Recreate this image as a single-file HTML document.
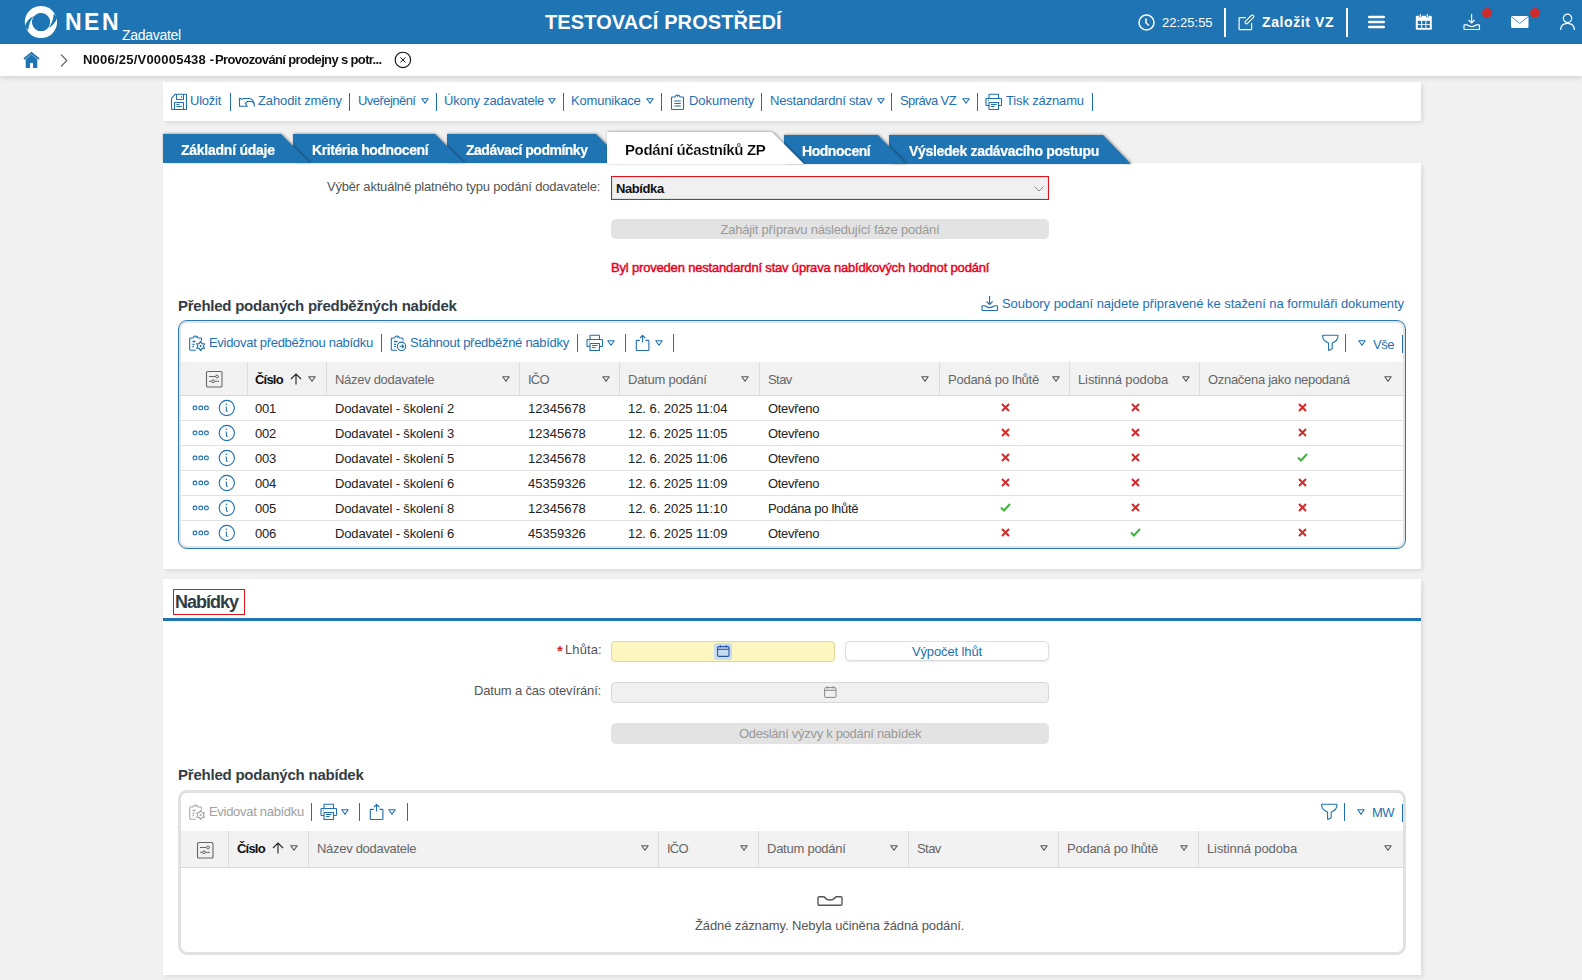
<!DOCTYPE html>
<html><head><meta charset="utf-8">
<style>
*{box-sizing:border-box;margin:0;padding:0}
html,body{width:1582px;height:980px;overflow:hidden;background:#f1f1f1;font-family:"Liberation Sans",sans-serif;color:#222}
.a{position:absolute;white-space:nowrap;line-height:normal}
svg.a{overflow:visible}
#hdr{position:absolute;left:0;top:0;width:1582px;height:44px;background:#1f74b3}
#bc{position:absolute;left:0;top:44px;width:1582px;height:32px;background:#fff;box-shadow:0 2px 5px rgba(0,0,0,.13);z-index:1}
.box{position:absolute;background:#fff;box-shadow:2px 2px 4px rgba(0,0,0,.09)}
.f13{font-size:13px;letter-spacing:-0.25px}
.bl{color:#1f6fb2}
.sep{position:absolute;width:1px;height:18px;background:#1f6fb2}
.tab{position:absolute;height:29px;filter:drop-shadow(0 -1px 1px rgba(0,0,0,.18)) drop-shadow(2px 0 1px rgba(0,0,0,.18))}
.tab svg{position:absolute;left:0;top:0}
.tabt{position:absolute;font-size:14px;font-weight:bold;color:#fff;letter-spacing:-0.5px;white-space:nowrap;-webkit-text-stroke:0.2px #fff}
.hd{position:absolute;font-size:13px;color:#666;letter-spacing:-0.25px;white-space:nowrap}
.cl{position:absolute;width:1px;background:#dcdcdc}
.rl{position:absolute;height:1px;background:#e2e2e2}
.td{position:absolute;font-size:13px;color:#222;letter-spacing:-0.15px;white-space:nowrap}
</style></head><body>
<!-- ============ HEADER ============ -->
<div id="hdr">
  <svg class="a" style="left:25px;top:6px" width="32" height="32" viewBox="0 0 32 32">
    <path d="M16 -0.1 A16.1 16.1 0 1 1 15.9 -0.1 Z M16 6.9 A9.1 9.1 0 1 0 16.1 6.9 Z" fill="#fff" fill-rule="evenodd"/>
    <path id="g1" d="M-0.2 20.4 C1.2 15.3 4.5 11.8 8.8 9.9 C5.8 13 3.9 17.8 3.1 24.6 Z" fill="#1f74b3"/>
    <path d="M-0.2 20.4 C1.2 15.3 4.5 11.8 8.8 9.9 C5.8 13 3.9 17.8 3.1 24.6 Z" fill="#1f74b3" transform="rotate(180 16 16)"/>
  </svg>
  <div class="a" style="left:65px;top:9px;font-size:23px;font-weight:bold;color:#fff;letter-spacing:2.5px">NEN</div>
  <div class="a" style="left:122px;top:27px;font-size:14px;color:#fff;letter-spacing:-0.3px">Zadavatel</div>
  <div class="a" style="left:545px;top:11px;font-size:20px;font-weight:bold;color:#fff;letter-spacing:0.1px">TESTOVACÍ PROSTŘEDÍ</div>
  <!-- clock -->
  <svg class="a" style="left:1138px;top:14px" width="17" height="17" viewBox="0 0 17 17"><circle cx="8.5" cy="8.5" r="7.5" fill="none" stroke="#fff" stroke-width="1.5"/><path d="M8 4.5 V8.8 L10.8 11.5" fill="none" stroke="#fff" stroke-width="1.5"/></svg>
  <div class="a" style="left:1162px;top:15px;font-size:13px;color:#fff;letter-spacing:0px">22:25:55</div>
  <div class="a" style="left:1224px;top:8px;width:2px;height:29px;background:#fff"></div>
  <!-- edit -->
  <svg class="a" style="left:1238px;top:14px" width="17" height="17" viewBox="0 0 17 17"><path d="M7.7 3.7 H1.8 Q1.1 3.7 1.1 4.4 V15 Q1.1 15.6 1.8 15.6 H13 Q13.6 15.6 13.6 15 V9.1" fill="none" stroke="#fff" stroke-width="1.2"/><rect x="5.8" y="4" width="11.2" height="2.9" rx="1.45" fill="none" stroke="#fff" stroke-width="1.1" transform="rotate(-45 11.4 5.45)"/></svg>
  <div class="a" style="left:1262px;top:14px;font-size:14px;font-weight:bold;color:#fff;letter-spacing:0.6px">Založit VZ</div>
  <div class="a" style="left:1346px;top:8px;width:2px;height:29px;background:#fff"></div>
  <!-- hamburger -->
  <svg class="a" style="left:1368px;top:15px" width="17" height="14" viewBox="0 0 17 14"><path d="M1.2 2 H15.8 M1.2 7 H15.8 M1.2 12 H15.8" stroke="#fff" stroke-width="2.4" stroke-linecap="round"/></svg>
  <!-- calendar -->
  <svg class="a" style="left:1415px;top:14px" width="18" height="17" viewBox="0 0 18 17"><rect x="0.8" y="1.8" width="16" height="14" rx="1.2" fill="#fff"/><g fill="#1f74b3"><rect x="2.8" y="6.8" width="3.4" height="3.4"/><rect x="7.2" y="6.8" width="3.2" height="3.4"/><rect x="11.4" y="6.8" width="3.4" height="3.4"/><rect x="2.8" y="11" width="3.4" height="3"/><rect x="7.2" y="11" width="3.2" height="3"/><rect x="11.4" y="11" width="3.4" height="3"/><rect x="4" y="0" width="2.6" height="3.4"/><rect x="11" y="0" width="2.6" height="3.4"/></g><path d="M5.3 0 V3.5 M12.3 0 V3.5" stroke="#fff" stroke-width="1.1"/></svg>
  <!-- download -->
  <svg class="a" style="left:1463px;top:14px" width="18" height="17" viewBox="0 0 18 17"><path d="M8.6 0 V9 M5.6 6 L8.6 9 L11.6 6" fill="none" stroke="#fff" stroke-width="1.2"/><path d="M1.7 10.8 Q1 10.8 1 11.5 V14.8 Q1 15.5 1.7 15.5 H15.8 Q16.5 15.5 16.5 14.8 V11.5 Q16.5 10.8 15.8 10.8 H13.5 C12 12 10.5 12.6 8.75 12.6 C7 12.6 5.5 12 4 10.8 Z" fill="none" stroke="#fff" stroke-width="1.2" stroke-linejoin="round"/></svg>
  <div class="a" style="left:1482px;top:8px;width:10px;height:10px;border-radius:50%;background:#c92d2b"></div>
  <!-- mail -->
  <svg class="a" style="left:1511px;top:16px" width="18" height="12" viewBox="0 0 18 12"><rect x="0" y="0" width="17.5" height="12" rx="1.5" fill="#fff"/><path d="M0.6 0.9 L8.75 7.4 L16.9 0.9" fill="none" stroke="#1f74b3" stroke-width="0.8"/></svg>
  <div class="a" style="left:1530px;top:8px;width:10px;height:10px;border-radius:50%;background:#c92d2b"></div>
  <!-- user -->
  <svg class="a" style="left:1559px;top:13px" width="17" height="18" viewBox="0 0 17 18"><circle cx="8.5" cy="5.3" r="4.2" fill="none" stroke="#fff" stroke-width="1.2"/><path d="M1.5 17 C1.8 12.5 4.8 10.3 8.5 10.3 C12.2 10.3 15.2 12.5 15.5 17" fill="none" stroke="#fff" stroke-width="1.2"/></svg>
</div>

<!-- ============ BREADCRUMB ============ -->
<div id="bc">
  <svg class="a" style="left:23px;top:8px" width="17" height="16" viewBox="0 0 17 16"><path d="M1 7 L8.5 1 L16 7" fill="none" stroke="#1f74b3" stroke-width="1.8"/><path d="M2.7 7.2 L8.5 2.6 L14.3 7.2 V16 H10 V11 H7 V16 H2.7 Z" fill="#1f74b3"/></svg>
  <svg class="a" style="left:60px;top:10px" width="8" height="13" viewBox="0 0 8 13"><path d="M1 0.5 L6.8 6.5 L1 12.5" fill="none" stroke="#666" stroke-width="1.1"/></svg>
  <div class="a" style="left:83px;top:52px;position:fixed;font-size:13px;font-weight:bold;color:#111;letter-spacing:0.22px">N006/25/V00005438 -</div><div class="a" style="left:215px;top:52px;position:fixed;font-size:13px;font-weight:bold;color:#111;letter-spacing:-0.64px">Provozování prodejny s potr...</div>
  <svg class="a" style="left:394px;top:7px" width="18" height="18" viewBox="0 0 18 18"><circle cx="8.9" cy="8.9" r="7.7" fill="none" stroke="#111" stroke-width="1.15"/><path d="M6.4 6.4 L11.4 11.4 M11.4 6.4 L6.4 11.4" stroke="#111" stroke-width="1"/></svg>
</div>

<!-- ============ TOOLBAR ============ -->
<div class="box" style="left:163px;top:82px;width:1258px;height:39px"></div>
<div class="f13 bl">
  <svg class="a" style="left:171px;top:94px" width="16" height="16" viewBox="0 0 16 16"><g fill="none" stroke="#1f6fb2" stroke-width="1.1" stroke-linejoin="round"><path d="M0.5 4.5 L4 0.3 H15 Q15.5 0.3 15.5 0.8 V15 Q15.5 15.5 15 15.5 H1 Q0.5 15.5 0.5 15 Z"/><path d="M5.5 0.3 V5 Q5.5 5.5 6 5.5 H12 Q12.5 5.5 12.5 5 V0.3 M10.5 2.3 V3.8"/><path d="M3.5 15.5 V9 Q3.5 8.5 4 8.5 H12 Q12.5 8.5 12.5 9 V15.5 M5.5 10.5 H8.5 M5.5 12.5 H10.8"/></g></svg>
  <div class="a" style="left:190px;top:93px">Uložit</div>
  <div class="sep" style="left:230px;top:93px"></div>
  <svg class="a" style="left:238px;top:96px" width="18" height="12" viewBox="0 0 18 12"><path d="M1.5 2 V10.3 H9.3 L7.3 7.5 L9.5 5.5 H13.5 C15 5.7 16.2 7.5 16.5 10.5 M1.5 2 L3.5 3.2 L5.5 2.5 H11.5 C14.5 2.8 16.3 5.5 16.5 10.5" fill="none" stroke="#1f6fb2" stroke-width="1.1" stroke-linejoin="round"/></svg>
  <div class="a" style="left:258px;top:93px;letter-spacing:-0.1px">Zahodit změny</div>
  <div class="sep" style="left:349px;top:93px"></div>
  <div class="a" style="left:358px;top:93px;letter-spacing:-0.55px">Uveřejnění</div>
  <svg class="a tri" style="left:421px;top:98px" width="8" height="6" viewBox="0 0 8 6"><path d="M0.8 0.7 H7.2 L4 5.3 Z" fill="none" stroke="#1f6fb2" stroke-width="1.1" stroke-linejoin="round"/></svg>
  <div class="sep" style="left:436px;top:93px"></div>
  <div class="a" style="left:444px;top:93px;letter-spacing:-0.2px">Úkony zadavatele</div>
  <svg class="a tri" style="left:548px;top:98px" width="8" height="6" viewBox="0 0 8 6"><path d="M0.8 0.7 H7.2 L4 5.3 Z" fill="none" stroke="#1f6fb2" stroke-width="1.1" stroke-linejoin="round"/></svg>
  <div class="sep" style="left:563px;top:93px"></div>
  <div class="a" style="left:571px;top:93px;letter-spacing:-0.2px">Komunikace</div>
  <svg class="a tri" style="left:646px;top:98px" width="8" height="6" viewBox="0 0 8 6"><path d="M0.8 0.7 H7.2 L4 5.3 Z" fill="none" stroke="#1f6fb2" stroke-width="1.1" stroke-linejoin="round"/></svg>
  <div class="sep" style="left:661px;top:93px"></div>
  <svg class="a" style="left:670px;top:93px" width="15" height="17" viewBox="0 0 15 17"><g fill="none" stroke="#1f6fb2" stroke-width="1.1" stroke-linejoin="round"><path d="M2.2 4 H5 C5.5 1.3 9.5 1.3 10 4 H12.8 Q13.5 4 13.5 4.7 V15.8 Q13.5 16.5 12.8 16.5 H2.2 Q1.5 16.5 1.5 15.8 V4.7 Q1.5 4 2.2 4 Z"/><path d="M4.3 8 H10.8 M4.3 10.5 H10.8 M4.3 13 H10.8" stroke-width="1.2"/></g><circle cx="7.5" cy="3.3" r="0.7" fill="#1f6fb2"/></svg>
  <div class="a" style="left:689px;top:93px;letter-spacing:-0.05px">Dokumenty</div>
  <div class="sep" style="left:761px;top:93px"></div>
  <div class="a" style="left:770px;top:93px;letter-spacing:-0.2px">Nestandardní stav</div>
  <svg class="a tri" style="left:877px;top:98px" width="8" height="6" viewBox="0 0 8 6"><path d="M0.8 0.7 H7.2 L4 5.3 Z" fill="none" stroke="#1f6fb2" stroke-width="1.1" stroke-linejoin="round"/></svg>
  <div class="sep" style="left:891px;top:93px"></div>
  <div class="a" style="left:900px;top:93px;letter-spacing:-0.6px">Správa VZ</div>
  <svg class="a tri" style="left:962px;top:98px" width="8" height="6" viewBox="0 0 8 6"><path d="M0.8 0.7 H7.2 L4 5.3 Z" fill="none" stroke="#1f6fb2" stroke-width="1.1" stroke-linejoin="round"/></svg>
  <div class="sep" style="left:977px;top:93px"></div>
  <svg class="a" style="left:985px;top:94px" width="17" height="16" viewBox="0 0 17 16"><g fill="none" stroke="#1f6fb2" stroke-width="1.1" stroke-linejoin="round"><path d="M4 4.5 V0.8 Q4 0.3 4.5 0.3 H13 Q13.5 0.3 13.5 0.8 V4.5"/><path d="M4 11.5 H1.5 Q1 11.5 1 11 V5 Q1 4.5 1.5 4.5 H16 Q16.5 4.5 16.5 5 V11 Q16.5 11.5 16 11.5 H13.5"/><path d="M4 8.5 H13.5 V15.5 H4 Z M6 10.5 H11.5 M6 12.5 H9.5"/></g><circle cx="3.5" cy="6.5" r="0.6" fill="#1f6fb2"/></svg>
  <div class="a" style="left:1006px;top:93px;letter-spacing:-0.15px">Tisk záznamu</div>
  <div class="sep" style="left:1092px;top:93px"></div>
</div>

<!-- ============ TABS ============ -->
<div class="tab" style="left:163px;top:134px;width:150px;z-index:6">
  <svg width="150" height="29"><path d="M0 0 H118 L147 29 H0 Z" fill="#1f74b3"/></svg>
  <div class="tabt" style="left:18px;top:8px;letter-spacing:-0.25px">Základní údaje</div>
</div>
<div class="tab" style="left:293px;top:134px;width:175px;z-index:5">
  <svg width="175" height="29"><path d="M0 0 H142 L171 29 H0 Z" fill="#1f74b3"/></svg>
  <div class="tabt" style="left:19px;top:8px;letter-spacing:-0.42px">Kritéria hodnocení</div>
</div>
<div class="tab" style="left:447px;top:134px;width:180px;z-index:4">
  <svg width="180" height="29"><path d="M0 0 H149 L178 29 H0 Z" fill="#1f74b3"/></svg>
  <div class="tabt" style="left:19px;top:8px;letter-spacing:-0.5px">Zadávací podmínky</div>
</div>
<div class="tab" style="left:889px;top:135px;width:245px;z-index:2">
  <svg width="245" height="29"><path d="M0 0 H214 L242 29 H0 Z" fill="#1f74b3"/></svg>
  <div class="tabt" style="left:20px;top:8px;letter-spacing:-0.34px">Výsledek zadávacího postupu</div>
</div>
<div class="tab" style="left:784px;top:135px;width:125px;z-index:3">
  <svg width="125" height="29"><path d="M0 0 H94 L122 29 H0 Z" fill="#1f74b3"/></svg>
  <div class="tabt" style="left:18px;top:8px;letter-spacing:-0.45px">Hodnocení</div>
</div>

<!-- ============ MAIN BOX 1 ============ -->
<div class="box" style="left:163px;top:163px;width:1258px;height:406px"></div>
<div class="tab" style="left:607px;top:132px;width:200px;z-index:7">
  <svg width="200" height="32"><path d="M0 0 H165 L197 32 H0 Z" fill="#fff"/></svg>
  <div class="tabt" style="left:18px;top:9px;font-size:15px;color:#000;letter-spacing:-0.38px">Podání účastníků ZP</div>
</div>


<!-- ============ FORM 1 ============ -->
<div class="a f13" style="left:327px;top:179px;color:#555;letter-spacing:-0.2px">Výběr aktuálně platného typu podání dodavatele:</div>
<div class="a" style="left:611px;top:176px;width:438px;height:24px;border:1px solid #e3131d;background:#f0f0f0;box-shadow:inset 0 0 0 1px #dfe3e3"></div>
<div class="a" style="left:616px;top:181px;font-size:13px;font-weight:bold;color:#111;letter-spacing:-0.4px">Nabídka</div>
<svg class="a" style="left:1034px;top:186px" width="10" height="6" viewBox="0 0 10 6"><path d="M0.5 0.5 L5 5 L9.5 0.5" fill="none" stroke="#888" stroke-width="1"/></svg>
<div class="a" style="left:611px;top:219px;width:438px;height:20px;border-radius:5px;background:#e3e3e3"></div>
<div class="a f13" style="left:611px;top:222px;width:438px;text-align:center;color:#999;letter-spacing:-0.22px">Zahájit přípravu následující fáze podání</div>
<div class="a" style="left:611px;top:260px;font-size:13px;color:#e8001c;letter-spacing:-0.18px;-webkit-text-stroke:0.45px #e8001c">Byl proveden nestandardní stav úprava nabídkových hodnot podání</div>

<div class="a" style="left:178px;top:297px;font-size:15px;font-weight:bold;color:#333c45;letter-spacing:-0.25px">Přehled podaných předběžných nabídek</div>
<svg class="a" style="left:981px;top:296px" width="18" height="16" viewBox="0 0 18 16"><path d="M8.6 0 V8.5 M5.6 5.5 L8.6 8.5 L11.6 5.5" fill="none" stroke="#1f6fb2" stroke-width="1.1"/><path d="M1.7 9.8 Q1 9.8 1 10.5 V13.8 Q1 14.5 1.7 14.5 H15.8 Q16.5 14.5 16.5 13.8 V10.5 Q16.5 9.8 15.8 9.8 H13.5 C12 11 10.5 11.6 8.75 11.6 C7 11.6 5.5 11 4 9.8 Z" fill="none" stroke="#1f6fb2" stroke-width="1.1" stroke-linejoin="round"/></svg>
<div class="a f13 bl" style="left:1002px;top:296px;letter-spacing:-0.05px">Soubory podaní najdete připravené ke stažení na formuláři dokumenty</div>


<!-- ============ PANEL 1 ============ -->
<div class="a" style="left:178px;top:320px;width:1228px;height:229px;border:1px solid #2a78b8;border-radius:9px;box-shadow:inset 0 0 0 2px #e3e4e6;background:#fff"></div>
<svg class="a" style="left:189px;top:335px" width="17" height="17" viewBox="0 0 17 17"><g fill="none" stroke="#1f6fb2" stroke-width="1.1" stroke-linejoin="round"><path d="M6.8 15.3 H1.6 Q0.7 15.3 0.7 14.4 V3.9 Q0.7 3 1.6 3 H4 C4.5 0.3 8.5 0.3 9 3 H11.6 Q12.5 3 12.5 3.9 V5.8"/><path d="M11.60 6.40 L12.97 8.62 L15.58 8.70 L14.35 11.00 L15.58 13.30 L12.97 13.38 L11.60 15.60 L10.22 13.38 L7.62 13.30 L8.85 11.00 L7.62 8.70 L10.22 8.62 Z"/></g><g stroke="#1f6fb2" stroke-width="1.3"><path d="M3.5 6.5 H6.5 M3.5 9.3 H5.5 M3.5 11.6 H5"/></g><circle cx="7" cy="2.3" r="0.6" fill="#1f6fb2"/><circle cx="11.6" cy="11" r="1" fill="#1f6fb2"/></svg>
<div class="a f13 bl" style="left:209px;top:335px;letter-spacing:-0.3px">Evidovat předběžnou nabídku</div>
<div class="sep" style="left:381px;top:334px"></div>
<svg class="a" style="left:390px;top:335px" width="17" height="17" viewBox="0 0 17 17"><g fill="none" stroke="#1f6fb2" stroke-width="1.1" stroke-linejoin="round"><path d="M7 15.3 H2.2 Q1.3 15.3 1.3 14.4 V3.9 Q1.3 3 2.2 3 H4.5 C5 0.3 9 0.3 9.5 3 H12 Q13 3 13 4 V5.5"/><circle cx="11.5" cy="11.3" r="4.2"/><path d="M9.6 11.3 H13.6 M12 9.6 L13.7 11.3 L12 13"/></g><g stroke="#1f6fb2" stroke-width="1.3"><path d="M4 6.5 H7.5 M4 9.3 H6 M4 11.6 H5.8"/></g><circle cx="7.3" cy="2.3" r="0.6" fill="#1f6fb2"/></svg>
<div class="a f13 bl" style="left:410px;top:335px;letter-spacing:-0.28px">Stáhnout předběžné nabídky</div>
<div class="sep" style="left:577px;top:334px"></div>
<svg class="a" style="left:586px;top:335px" width="17" height="16" viewBox="0 0 17 16"><g fill="none" stroke="#1f6fb2" stroke-width="1.1" stroke-linejoin="round"><path d="M4 4.5 V0.8 Q4 0.3 4.5 0.3 H13 Q13.5 0.3 13.5 0.8 V4.5"/><path d="M4 11.5 H1.5 Q1 11.5 1 11 V5 Q1 4.5 1.5 4.5 H16 Q16.5 4.5 16.5 5 V11 Q16.5 11.5 16 11.5 H13.5"/><path d="M4 8.5 H13.5 V15.5 H4 Z M6 10.5 H11.5 M6 12.5 H9.5"/></g><circle cx="3.5" cy="6.5" r="0.6" fill="#1f6fb2"/></svg>
<svg class="a" style="left:607px;top:340px" width="8" height="6" viewBox="0 0 8 6"><path d="M0.8 0.7 H7.2 L4 5.3 Z" fill="none" stroke="#1f6fb2" stroke-width="1.1" stroke-linejoin="round"/></svg>
<div class="sep" style="left:625px;top:334px"></div>
<svg class="a" style="left:635px;top:334px" width="15" height="17" viewBox="0 0 15 17"><g fill="none" stroke="#1f6fb2" stroke-width="1.1" stroke-linejoin="round"><path d="M4.8 6.4 H2 Q1.3 6.4 1.3 7.1 V15.8 Q1.3 16.5 2 16.5 H13.2 Q13.9 16.5 13.9 15.8 V7.1 Q13.9 6.4 13.2 6.4 H10.4"/><path d="M7.6 8.6 V1.5 M5 4 L7.6 1.4 L10.2 4"/></g></svg>
<svg class="a" style="left:655px;top:340px" width="8" height="6" viewBox="0 0 8 6"><path d="M0.8 0.7 H7.2 L4 5.3 Z" fill="none" stroke="#1f6fb2" stroke-width="1.1" stroke-linejoin="round"/></svg>
<div class="sep" style="left:673px;top:334px"></div>
<svg class="a" style="left:1322px;top:334px" width="17" height="17" viewBox="0 0 17 17"><path d="M1 1.3 H15.6 Q16 1.3 16 1.8 C16 5 13.8 7.8 10.2 9 V14.3 Q10.2 14.8 9.8 15 L7.2 16.3 Q6.6 16.5 6.6 16 V9 C3 7.8 0.6 5 0.6 1.8 Q0.6 1.3 1 1.3 Z" fill="none" stroke="#1f6fb2" stroke-width="1.1" stroke-linejoin="round"/></svg>
<div class="sep" style="left:1345px;top:334px"></div>
<svg class="a" style="left:1358px;top:340px" width="8" height="6" viewBox="0 0 8 6"><path d="M0.8 0.7 H7.2 L4 5.3 Z" fill="none" stroke="#1f6fb2" stroke-width="1.1" stroke-linejoin="round"/></svg>
<div class="a f13 bl" style="left:1373px;top:337px;letter-spacing:-0.4px">Vše</div>
<div class="sep" style="left:1402px;top:335px;width:1px"></div>
<!-- table header -->
<div class="a" style="left:181px;top:362px;width:1222px;height:34px;background:#f2f2f2;border-bottom:1px solid #d9d9d9"></div>

<div class="cl" style="left:247px;top:362px;height:33px"></div>
<div class="cl" style="left:326px;top:362px;height:33px"></div>
<div class="cl" style="left:519px;top:362px;height:33px"></div>
<div class="cl" style="left:619px;top:362px;height:33px"></div>
<div class="cl" style="left:759px;top:362px;height:33px"></div>
<div class="cl" style="left:939px;top:362px;height:33px"></div>
<div class="cl" style="left:1069px;top:362px;height:33px"></div>
<div class="cl" style="left:1199px;top:362px;height:33px"></div>
<svg class="a" style="left:206px;top:371px" width="17" height="17" viewBox="0 0 17 17"><rect x="0.5" y="0.5" width="15.5" height="15.5" rx="1.3" fill="none" stroke="#666" stroke-width="1.1"/><path d="M3 5.5 H13 M3 10.3 H13" stroke="#666" stroke-width="1"/><circle cx="11" cy="5.5" r="1.4" fill="#f2f2f2" stroke="#666" stroke-width="1"/><circle cx="7" cy="10.3" r="1.4" fill="#f2f2f2" stroke="#666" stroke-width="1"/></svg>
<div class="a" style="left:255px;top:372px;font-size:13px;font-weight:bold;color:#111;letter-spacing:-0.8px">Číslo</div>
<svg class="a" style="left:290px;top:373px" width="12" height="12" viewBox="0 0 12 12"><path d="M6 11.5 V1 M1 6 L6 1 L11 6" fill="none" stroke="#222" stroke-width="1.1"/></svg>
<svg class="a" style="left:308px;top:376px" width="8" height="6" viewBox="0 0 8 6"><path d="M0.8 0.7 H7.2 L4 5.3 Z" fill="none" stroke="#555" stroke-width="1.1" stroke-linejoin="round"/></svg>
<div class="hd" style="left:335px;top:372px;letter-spacing:-0.3px">Název dodavatele</div>
<svg class="a" style="left:502px;top:376px" width="8" height="6" viewBox="0 0 8 6"><path d="M0.8 0.7 H7.2 L4 5.3 Z" fill="none" stroke="#555" stroke-width="1.1" stroke-linejoin="round"/></svg>
<div class="hd" style="left:528px;top:372px;letter-spacing:-0.8px">IČO</div>
<svg class="a" style="left:602px;top:376px" width="8" height="6" viewBox="0 0 8 6"><path d="M0.8 0.7 H7.2 L4 5.3 Z" fill="none" stroke="#555" stroke-width="1.1" stroke-linejoin="round"/></svg>
<div class="hd" style="left:628px;top:372px;letter-spacing:-0.25px">Datum podání</div>
<svg class="a" style="left:741px;top:376px" width="8" height="6" viewBox="0 0 8 6"><path d="M0.8 0.7 H7.2 L4 5.3 Z" fill="none" stroke="#555" stroke-width="1.1" stroke-linejoin="round"/></svg>
<div class="hd" style="left:768px;top:372px;letter-spacing:-0.55px">Stav</div>
<svg class="a" style="left:921px;top:376px" width="8" height="6" viewBox="0 0 8 6"><path d="M0.8 0.7 H7.2 L4 5.3 Z" fill="none" stroke="#555" stroke-width="1.1" stroke-linejoin="round"/></svg>
<div class="hd" style="left:948px;top:372px;letter-spacing:-0.25px">Podaná po lhůtě</div>
<svg class="a" style="left:1052px;top:376px" width="8" height="6" viewBox="0 0 8 6"><path d="M0.8 0.7 H7.2 L4 5.3 Z" fill="none" stroke="#555" stroke-width="1.1" stroke-linejoin="round"/></svg>
<div class="hd" style="left:1078px;top:372px;letter-spacing:-0.12px">Listinná podoba</div>
<svg class="a" style="left:1182px;top:376px" width="8" height="6" viewBox="0 0 8 6"><path d="M0.8 0.7 H7.2 L4 5.3 Z" fill="none" stroke="#555" stroke-width="1.1" stroke-linejoin="round"/></svg>
<div class="hd" style="left:1208px;top:372px;letter-spacing:-0.3px">Označena jako nepodaná</div>
<svg class="a" style="left:1384px;top:376px" width="8" height="6" viewBox="0 0 8 6"><path d="M0.8 0.7 H7.2 L4 5.3 Z" fill="none" stroke="#555" stroke-width="1.1" stroke-linejoin="round"/></svg>
<div class="rl" style="left:181px;top:420px;width:1222px"></div>
<svg class="a" style="left:192px;top:405px" width="18" height="6" viewBox="0 0 18 6"><rect x="1.2" y="1.1" width="3.6" height="3.6" rx="1.2" fill="none" stroke="#1f6fb2" stroke-width="1.1"/><rect x="7" y="1.1" width="3.6" height="3.6" rx="1.2" fill="none" stroke="#1f6fb2" stroke-width="1.1"/><rect x="12.6" y="1.1" width="3.6" height="3.6" rx="1.2" fill="none" stroke="#1f6fb2" stroke-width="1.1"/></svg>
<svg class="a" style="left:218px;top:400px" width="17" height="17" viewBox="0 0 17 17"><circle cx="8.8" cy="8" r="7.6" fill="none" stroke="#1f6fb2" stroke-width="1.1"/><circle cx="8.4" cy="4.3" r="0.8" fill="#1f6fb2"/><path d="M7.6 6.8 C8.3 6.8 8.4 7.2 8.4 8 V10.3 C8.4 11 8.8 11.4 9.6 11.6" fill="none" stroke="#1f6fb2" stroke-width="1.1"/></svg>
<div class="td" style="left:255px;top:401px;letter-spacing:-0.2px">001</div>
<div class="td" style="left:335px;top:401px">Dodavatel - školení 2</div>
<div class="td" style="left:528px;top:401px;letter-spacing:0px">12345678</div>
<div class="td" style="left:628px;top:401px;letter-spacing:-0.05px">12. 6. 2025 11:04</div>
<div class="td" style="left:768px;top:401px;letter-spacing:-0.3px">Otevřeno</div>
<svg class="a" style="left:1001px;top:403px" width="9" height="9" viewBox="0 0 9 9"><path d="M1 1 L8 8 M8 1 L1 8" stroke="#d42a2a" stroke-width="2"/></svg>
<svg class="a" style="left:1131px;top:403px" width="9" height="9" viewBox="0 0 9 9"><path d="M1 1 L8 8 M8 1 L1 8" stroke="#d42a2a" stroke-width="2"/></svg>
<svg class="a" style="left:1298px;top:403px" width="9" height="9" viewBox="0 0 9 9"><path d="M1 1 L8 8 M8 1 L1 8" stroke="#d42a2a" stroke-width="2"/></svg>
<div class="rl" style="left:181px;top:445px;width:1222px"></div>
<svg class="a" style="left:192px;top:430px" width="18" height="6" viewBox="0 0 18 6"><rect x="1.2" y="1.1" width="3.6" height="3.6" rx="1.2" fill="none" stroke="#1f6fb2" stroke-width="1.1"/><rect x="7" y="1.1" width="3.6" height="3.6" rx="1.2" fill="none" stroke="#1f6fb2" stroke-width="1.1"/><rect x="12.6" y="1.1" width="3.6" height="3.6" rx="1.2" fill="none" stroke="#1f6fb2" stroke-width="1.1"/></svg>
<svg class="a" style="left:218px;top:425px" width="17" height="17" viewBox="0 0 17 17"><circle cx="8.8" cy="8" r="7.6" fill="none" stroke="#1f6fb2" stroke-width="1.1"/><circle cx="8.4" cy="4.3" r="0.8" fill="#1f6fb2"/><path d="M7.6 6.8 C8.3 6.8 8.4 7.2 8.4 8 V10.3 C8.4 11 8.8 11.4 9.6 11.6" fill="none" stroke="#1f6fb2" stroke-width="1.1"/></svg>
<div class="td" style="left:255px;top:426px;letter-spacing:-0.2px">002</div>
<div class="td" style="left:335px;top:426px">Dodavatel - školení 3</div>
<div class="td" style="left:528px;top:426px;letter-spacing:0px">12345678</div>
<div class="td" style="left:628px;top:426px;letter-spacing:-0.05px">12. 6. 2025 11:05</div>
<div class="td" style="left:768px;top:426px;letter-spacing:-0.3px">Otevřeno</div>
<svg class="a" style="left:1001px;top:428px" width="9" height="9" viewBox="0 0 9 9"><path d="M1 1 L8 8 M8 1 L1 8" stroke="#d42a2a" stroke-width="2"/></svg>
<svg class="a" style="left:1131px;top:428px" width="9" height="9" viewBox="0 0 9 9"><path d="M1 1 L8 8 M8 1 L1 8" stroke="#d42a2a" stroke-width="2"/></svg>
<svg class="a" style="left:1298px;top:428px" width="9" height="9" viewBox="0 0 9 9"><path d="M1 1 L8 8 M8 1 L1 8" stroke="#d42a2a" stroke-width="2"/></svg>
<div class="rl" style="left:181px;top:470px;width:1222px"></div>
<svg class="a" style="left:192px;top:455px" width="18" height="6" viewBox="0 0 18 6"><rect x="1.2" y="1.1" width="3.6" height="3.6" rx="1.2" fill="none" stroke="#1f6fb2" stroke-width="1.1"/><rect x="7" y="1.1" width="3.6" height="3.6" rx="1.2" fill="none" stroke="#1f6fb2" stroke-width="1.1"/><rect x="12.6" y="1.1" width="3.6" height="3.6" rx="1.2" fill="none" stroke="#1f6fb2" stroke-width="1.1"/></svg>
<svg class="a" style="left:218px;top:450px" width="17" height="17" viewBox="0 0 17 17"><circle cx="8.8" cy="8" r="7.6" fill="none" stroke="#1f6fb2" stroke-width="1.1"/><circle cx="8.4" cy="4.3" r="0.8" fill="#1f6fb2"/><path d="M7.6 6.8 C8.3 6.8 8.4 7.2 8.4 8 V10.3 C8.4 11 8.8 11.4 9.6 11.6" fill="none" stroke="#1f6fb2" stroke-width="1.1"/></svg>
<div class="td" style="left:255px;top:451px;letter-spacing:-0.2px">003</div>
<div class="td" style="left:335px;top:451px">Dodavatel - školení 5</div>
<div class="td" style="left:528px;top:451px;letter-spacing:0px">12345678</div>
<div class="td" style="left:628px;top:451px;letter-spacing:-0.05px">12. 6. 2025 11:06</div>
<div class="td" style="left:768px;top:451px;letter-spacing:-0.3px">Otevřeno</div>
<svg class="a" style="left:1001px;top:453px" width="9" height="9" viewBox="0 0 9 9"><path d="M1 1 L8 8 M8 1 L1 8" stroke="#d42a2a" stroke-width="2"/></svg>
<svg class="a" style="left:1131px;top:453px" width="9" height="9" viewBox="0 0 9 9"><path d="M1 1 L8 8 M8 1 L1 8" stroke="#d42a2a" stroke-width="2"/></svg>
<svg class="a" style="left:1297px;top:453px" width="11" height="9" viewBox="0 0 11 9"><path d="M1 4.5 L4 7.5 L10 1" fill="none" stroke="#3cb43c" stroke-width="2"/></svg>
<div class="rl" style="left:181px;top:495px;width:1222px"></div>
<svg class="a" style="left:192px;top:480px" width="18" height="6" viewBox="0 0 18 6"><rect x="1.2" y="1.1" width="3.6" height="3.6" rx="1.2" fill="none" stroke="#1f6fb2" stroke-width="1.1"/><rect x="7" y="1.1" width="3.6" height="3.6" rx="1.2" fill="none" stroke="#1f6fb2" stroke-width="1.1"/><rect x="12.6" y="1.1" width="3.6" height="3.6" rx="1.2" fill="none" stroke="#1f6fb2" stroke-width="1.1"/></svg>
<svg class="a" style="left:218px;top:475px" width="17" height="17" viewBox="0 0 17 17"><circle cx="8.8" cy="8" r="7.6" fill="none" stroke="#1f6fb2" stroke-width="1.1"/><circle cx="8.4" cy="4.3" r="0.8" fill="#1f6fb2"/><path d="M7.6 6.8 C8.3 6.8 8.4 7.2 8.4 8 V10.3 C8.4 11 8.8 11.4 9.6 11.6" fill="none" stroke="#1f6fb2" stroke-width="1.1"/></svg>
<div class="td" style="left:255px;top:476px;letter-spacing:-0.2px">004</div>
<div class="td" style="left:335px;top:476px">Dodavatel - školení 6</div>
<div class="td" style="left:528px;top:476px;letter-spacing:0px">45359326</div>
<div class="td" style="left:628px;top:476px;letter-spacing:-0.05px">12. 6. 2025 11:09</div>
<div class="td" style="left:768px;top:476px;letter-spacing:-0.3px">Otevřeno</div>
<svg class="a" style="left:1001px;top:478px" width="9" height="9" viewBox="0 0 9 9"><path d="M1 1 L8 8 M8 1 L1 8" stroke="#d42a2a" stroke-width="2"/></svg>
<svg class="a" style="left:1131px;top:478px" width="9" height="9" viewBox="0 0 9 9"><path d="M1 1 L8 8 M8 1 L1 8" stroke="#d42a2a" stroke-width="2"/></svg>
<svg class="a" style="left:1298px;top:478px" width="9" height="9" viewBox="0 0 9 9"><path d="M1 1 L8 8 M8 1 L1 8" stroke="#d42a2a" stroke-width="2"/></svg>
<div class="rl" style="left:181px;top:520px;width:1222px"></div>
<svg class="a" style="left:192px;top:505px" width="18" height="6" viewBox="0 0 18 6"><rect x="1.2" y="1.1" width="3.6" height="3.6" rx="1.2" fill="none" stroke="#1f6fb2" stroke-width="1.1"/><rect x="7" y="1.1" width="3.6" height="3.6" rx="1.2" fill="none" stroke="#1f6fb2" stroke-width="1.1"/><rect x="12.6" y="1.1" width="3.6" height="3.6" rx="1.2" fill="none" stroke="#1f6fb2" stroke-width="1.1"/></svg>
<svg class="a" style="left:218px;top:500px" width="17" height="17" viewBox="0 0 17 17"><circle cx="8.8" cy="8" r="7.6" fill="none" stroke="#1f6fb2" stroke-width="1.1"/><circle cx="8.4" cy="4.3" r="0.8" fill="#1f6fb2"/><path d="M7.6 6.8 C8.3 6.8 8.4 7.2 8.4 8 V10.3 C8.4 11 8.8 11.4 9.6 11.6" fill="none" stroke="#1f6fb2" stroke-width="1.1"/></svg>
<div class="td" style="left:255px;top:501px;letter-spacing:-0.2px">005</div>
<div class="td" style="left:335px;top:501px">Dodavatel - školení 8</div>
<div class="td" style="left:528px;top:501px;letter-spacing:0px">12345678</div>
<div class="td" style="left:628px;top:501px;letter-spacing:-0.05px">12. 6. 2025 11:10</div>
<div class="td" style="left:768px;top:501px;letter-spacing:-0.3px">Podána po lhůtě</div>
<svg class="a" style="left:1000px;top:503px" width="11" height="9" viewBox="0 0 11 9"><path d="M1 4.5 L4 7.5 L10 1" fill="none" stroke="#3cb43c" stroke-width="2"/></svg>
<svg class="a" style="left:1131px;top:503px" width="9" height="9" viewBox="0 0 9 9"><path d="M1 1 L8 8 M8 1 L1 8" stroke="#d42a2a" stroke-width="2"/></svg>
<svg class="a" style="left:1298px;top:503px" width="9" height="9" viewBox="0 0 9 9"><path d="M1 1 L8 8 M8 1 L1 8" stroke="#d42a2a" stroke-width="2"/></svg>
<svg class="a" style="left:192px;top:530px" width="18" height="6" viewBox="0 0 18 6"><rect x="1.2" y="1.1" width="3.6" height="3.6" rx="1.2" fill="none" stroke="#1f6fb2" stroke-width="1.1"/><rect x="7" y="1.1" width="3.6" height="3.6" rx="1.2" fill="none" stroke="#1f6fb2" stroke-width="1.1"/><rect x="12.6" y="1.1" width="3.6" height="3.6" rx="1.2" fill="none" stroke="#1f6fb2" stroke-width="1.1"/></svg>
<svg class="a" style="left:218px;top:525px" width="17" height="17" viewBox="0 0 17 17"><circle cx="8.8" cy="8" r="7.6" fill="none" stroke="#1f6fb2" stroke-width="1.1"/><circle cx="8.4" cy="4.3" r="0.8" fill="#1f6fb2"/><path d="M7.6 6.8 C8.3 6.8 8.4 7.2 8.4 8 V10.3 C8.4 11 8.8 11.4 9.6 11.6" fill="none" stroke="#1f6fb2" stroke-width="1.1"/></svg>
<div class="td" style="left:255px;top:526px;letter-spacing:-0.2px">006</div>
<div class="td" style="left:335px;top:526px">Dodavatel - školení 6</div>
<div class="td" style="left:528px;top:526px;letter-spacing:0px">45359326</div>
<div class="td" style="left:628px;top:526px;letter-spacing:-0.05px">12. 6. 2025 11:09</div>
<div class="td" style="left:768px;top:526px;letter-spacing:-0.3px">Otevřeno</div>
<svg class="a" style="left:1001px;top:528px" width="9" height="9" viewBox="0 0 9 9"><path d="M1 1 L8 8 M8 1 L1 8" stroke="#d42a2a" stroke-width="2"/></svg>
<svg class="a" style="left:1130px;top:528px" width="11" height="9" viewBox="0 0 11 9"><path d="M1 4.5 L4 7.5 L10 1" fill="none" stroke="#3cb43c" stroke-width="2"/></svg>
<svg class="a" style="left:1298px;top:528px" width="9" height="9" viewBox="0 0 9 9"><path d="M1 1 L8 8 M8 1 L1 8" stroke="#d42a2a" stroke-width="2"/></svg>
<!-- MAIN BOX 2 -->
<div class="box" style="left:163px;top:579px;width:1258px;height:396px"></div>


<!-- ============ NABIDKY ============ -->
<div class="a" style="left:173px;top:589px;width:72px;height:26px;border:1px solid #e3131d"></div>
<div class="a" style="left:175px;top:592px;font-size:18px;font-weight:bold;color:#333c45;letter-spacing:-1px">Nabídky</div>
<div class="a" style="left:163px;top:618px;width:1258px;height:3px;background:#1f74b3"></div>
<div class="a" style="left:557px;top:642px;font-size:15px;font-weight:bold;color:#d42a2a">*</div>
<div class="a f13" style="left:565px;top:642px;color:#555;letter-spacing:0.1px">Lhůta:</div>
<div class="a" style="left:611px;top:641px;width:224px;height:21px;border:1px solid #e0d89a;border-radius:4px;background:#fcf6c0"></div>
<div class="a" style="left:714px;top:643px;width:18px;height:17px;border-radius:3px;background:#c8dbef"></div>
<svg class="a" style="left:717px;top:645px" width="13" height="12" viewBox="0 0 13 12"><rect x="0.6" y="1.6" width="11.4" height="9.8" rx="1.1" fill="none" stroke="#2c57a6" stroke-width="1.1"/><path d="M0.6 4.3 H12" stroke="#2c57a6" stroke-width="1.1"/><path d="M3.4 0.2 V2.6 M9.2 0.2 V2.6" stroke="#2c57a6" stroke-width="1"/></svg>
<div class="a" style="left:845px;top:641px;width:204px;height:20px;border:1px solid #dedede;border-radius:5px;background:#fff;box-shadow:0 1px 2px rgba(0,0,0,.1)"></div>
<div class="a f13 bl" style="left:845px;top:644px;width:204px;text-align:center;letter-spacing:-0.12px">Výpočet lhůt</div>
<div class="a f13" style="left:474px;top:683px;color:#555;letter-spacing:-0.17px">Datum a čas otevírání:</div>
<div class="a" style="left:611px;top:682px;width:438px;height:21px;border:1px solid #d8d8d8;border-radius:4px;background:#f0f0f0"></div>
<svg class="a" style="left:824px;top:686px" width="13" height="12" viewBox="0 0 13 12"><rect x="0.6" y="1.6" width="11.4" height="9.8" rx="1.1" fill="none" stroke="#888" stroke-width="1"/><path d="M0.6 4.3 H12" stroke="#888" stroke-width="1"/><path d="M3.4 0.2 V2.6 M9.2 0.2 V2.6" stroke="#888" stroke-width="1"/></svg>
<div class="a" style="left:611px;top:723px;width:438px;height:21px;border-radius:5px;background:#e3e3e3"></div>
<div class="a f13" style="left:611px;top:726px;width:438px;text-align:center;color:#999;letter-spacing:-0.3px">Odeslání výzvy k podání nabídek</div>

<div class="a" style="left:178px;top:766px;font-size:15px;font-weight:bold;color:#333c45;letter-spacing:-0.22px">Přehled podaných nabídek</div>
<!-- ============ PANEL 2 ============ -->
<div class="a" style="left:178px;top:790px;width:1228px;height:165px;border:3px solid #dfe1e3;border-radius:9px;background:#fff"></div>
<svg class="a" style="left:189px;top:804px" width="17" height="17" viewBox="0 0 17 17"><g fill="none" stroke="#a8a8a8" stroke-width="1.1" stroke-linejoin="round"><path d="M6.8 15.3 H1.6 Q0.7 15.3 0.7 14.4 V3.9 Q0.7 3 1.6 3 H4 C4.5 0.3 8.5 0.3 9 3 H11.6 Q12.5 3 12.5 3.9 V5.8"/><path d="M11.60 6.40 L12.97 8.62 L15.58 8.70 L14.35 11.00 L15.58 13.30 L12.97 13.38 L11.60 15.60 L10.22 13.38 L7.62 13.30 L8.85 11.00 L7.62 8.70 L10.22 8.62 Z"/></g><g stroke="#a8a8a8" stroke-width="1.3"><path d="M3.5 6.5 H6.5 M3.5 9.3 H5.5 M3.5 11.6 H5"/></g><circle cx="7" cy="2.3" r="0.6" fill="#a8a8a8"/><circle cx="11.6" cy="11" r="1" fill="#a8a8a8"/></svg>
<div class="a f13" style="left:209px;top:804px;color:#a0a0a0;letter-spacing:-0.3px">Evidovat nabídku</div>
<div class="sep" style="left:311px;top:803px"></div>
<svg class="a" style="left:320px;top:804px" width="17" height="16" viewBox="0 0 17 16"><g fill="none" stroke="#1f6fb2" stroke-width="1.1" stroke-linejoin="round"><path d="M4 4.5 V0.8 Q4 0.3 4.5 0.3 H13 Q13.5 0.3 13.5 0.8 V4.5"/><path d="M4 11.5 H1.5 Q1 11.5 1 11 V5 Q1 4.5 1.5 4.5 H16 Q16.5 4.5 16.5 5 V11 Q16.5 11.5 16 11.5 H13.5"/><path d="M4 8.5 H13.5 V15.5 H4 Z M6 10.5 H11.5 M6 12.5 H9.5"/></g><circle cx="3.5" cy="6.5" r="0.6" fill="#1f6fb2"/></svg>
<svg class="a" style="left:341px;top:809px" width="8" height="6" viewBox="0 0 8 6"><path d="M0.8 0.7 H7.2 L4 5.3 Z" fill="none" stroke="#1f6fb2" stroke-width="1.1" stroke-linejoin="round"/></svg>
<div class="sep" style="left:359px;top:803px"></div>
<svg class="a" style="left:369px;top:803px" width="15" height="17" viewBox="0 0 15 17"><g fill="none" stroke="#1f6fb2" stroke-width="1.1" stroke-linejoin="round"><path d="M4.8 6.4 H2 Q1.3 6.4 1.3 7.1 V15.8 Q1.3 16.5 2 16.5 H13.2 Q13.9 16.5 13.9 15.8 V7.1 Q13.9 6.4 13.2 6.4 H10.4"/><path d="M7.6 8.6 V1.5 M5 4 L7.6 1.4 L10.2 4"/></g></svg>
<svg class="a" style="left:388px;top:809px" width="8" height="6" viewBox="0 0 8 6"><path d="M0.8 0.7 H7.2 L4 5.3 Z" fill="none" stroke="#1f6fb2" stroke-width="1.1" stroke-linejoin="round"/></svg>
<div class="sep" style="left:407px;top:803px"></div>
<svg class="a" style="left:1321px;top:803px" width="17" height="17" viewBox="0 0 17 17"><path d="M1 1.3 H15.6 Q16 1.3 16 1.8 C16 5 13.8 7.8 10.2 9 V14.3 Q10.2 14.8 9.8 15 L7.2 16.3 Q6.6 16.5 6.6 16 V9 C3 7.8 0.6 5 0.6 1.8 Q0.6 1.3 1 1.3 Z" fill="none" stroke="#1f6fb2" stroke-width="1.1" stroke-linejoin="round"/></svg>
<div class="sep" style="left:1344px;top:803px"></div>
<svg class="a" style="left:1357px;top:809px" width="8" height="6" viewBox="0 0 8 6"><path d="M0.8 0.7 H7.2 L4 5.3 Z" fill="none" stroke="#1f6fb2" stroke-width="1.1" stroke-linejoin="round"/></svg>
<div class="a f13 bl" style="left:1372px;top:805px;letter-spacing:-0.5px">MW</div>
<div class="sep" style="left:1402px;top:804px;width:1px"></div>
<div class="a" style="left:181px;top:831px;width:1222px;height:37px;background:#f2f2f2;border-bottom:1px solid #d9d9d9"></div>

<div class="cl" style="left:228px;top:831px;height:36px"></div>
<div class="cl" style="left:308px;top:831px;height:36px"></div>
<div class="cl" style="left:658px;top:831px;height:36px"></div>
<div class="cl" style="left:758px;top:831px;height:36px"></div>
<div class="cl" style="left:908px;top:831px;height:36px"></div>
<div class="cl" style="left:1058px;top:831px;height:36px"></div>
<div class="cl" style="left:1198px;top:831px;height:36px"></div>
<svg class="a" style="left:197px;top:842px" width="17" height="17" viewBox="0 0 17 17"><rect x="0.5" y="0.5" width="15.5" height="15.5" rx="1.3" fill="none" stroke="#666" stroke-width="1.1"/><path d="M3 5.5 H13 M3 10.3 H13" stroke="#666" stroke-width="1"/><circle cx="11" cy="5.5" r="1.4" fill="#f2f2f2" stroke="#666" stroke-width="1"/><circle cx="7" cy="10.3" r="1.4" fill="#f2f2f2" stroke="#666" stroke-width="1"/></svg>
<div class="a" style="left:237px;top:841px;font-size:13px;font-weight:bold;color:#111;letter-spacing:-0.8px">Číslo</div>
<svg class="a" style="left:272px;top:842px" width="12" height="12" viewBox="0 0 12 12"><path d="M6 11.5 V1 M1 6 L6 1 L11 6" fill="none" stroke="#222" stroke-width="1.1"/></svg>
<svg class="a" style="left:290px;top:845px" width="8" height="6" viewBox="0 0 8 6"><path d="M0.8 0.7 H7.2 L4 5.3 Z" fill="none" stroke="#555" stroke-width="1.1" stroke-linejoin="round"/></svg>
<div class="hd" style="left:317px;top:841px;letter-spacing:-0.3px">Název dodavatele</div>
<svg class="a" style="left:641px;top:845px" width="8" height="6" viewBox="0 0 8 6"><path d="M0.8 0.7 H7.2 L4 5.3 Z" fill="none" stroke="#555" stroke-width="1.1" stroke-linejoin="round"/></svg>
<div class="hd" style="left:667px;top:841px;letter-spacing:-0.8px">IČO</div>
<svg class="a" style="left:740px;top:845px" width="8" height="6" viewBox="0 0 8 6"><path d="M0.8 0.7 H7.2 L4 5.3 Z" fill="none" stroke="#555" stroke-width="1.1" stroke-linejoin="round"/></svg>
<div class="hd" style="left:767px;top:841px;letter-spacing:-0.25px">Datum podání</div>
<svg class="a" style="left:890px;top:845px" width="8" height="6" viewBox="0 0 8 6"><path d="M0.8 0.7 H7.2 L4 5.3 Z" fill="none" stroke="#555" stroke-width="1.1" stroke-linejoin="round"/></svg>
<div class="hd" style="left:917px;top:841px;letter-spacing:-0.55px">Stav</div>
<svg class="a" style="left:1040px;top:845px" width="8" height="6" viewBox="0 0 8 6"><path d="M0.8 0.7 H7.2 L4 5.3 Z" fill="none" stroke="#555" stroke-width="1.1" stroke-linejoin="round"/></svg>
<div class="hd" style="left:1067px;top:841px;letter-spacing:-0.25px">Podaná po lhůtě</div>
<svg class="a" style="left:1180px;top:845px" width="8" height="6" viewBox="0 0 8 6"><path d="M0.8 0.7 H7.2 L4 5.3 Z" fill="none" stroke="#555" stroke-width="1.1" stroke-linejoin="round"/></svg>
<div class="hd" style="left:1207px;top:841px;letter-spacing:-0.12px">Listinná podoba</div>
<svg class="a" style="left:1384px;top:845px" width="8" height="6" viewBox="0 0 8 6"><path d="M0.8 0.7 H7.2 L4 5.3 Z" fill="none" stroke="#555" stroke-width="1.1" stroke-linejoin="round"/></svg>
<svg class="a" style="left:817px;top:896px" width="26" height="11" viewBox="0 0 26 11"><path d="M1 2 Q1 0.7 2.3 0.7 H7 C8.5 2.6 10.5 4 13 4 C15.5 4 17.5 2.6 19 0.7 H23.7 Q25 0.7 25 2 V8 Q25 9.3 23.7 9.3 H2.3 Q1 9.3 1 8 Z" fill="none" stroke="#555" stroke-width="1.4" stroke-linejoin="round"/></svg>
<div class="a f13" style="left:695px;top:918px;color:#555;letter-spacing:-0.12px">Žádné záznamy. Nebyla učiněna žádná podání.</div>
</body></html>
